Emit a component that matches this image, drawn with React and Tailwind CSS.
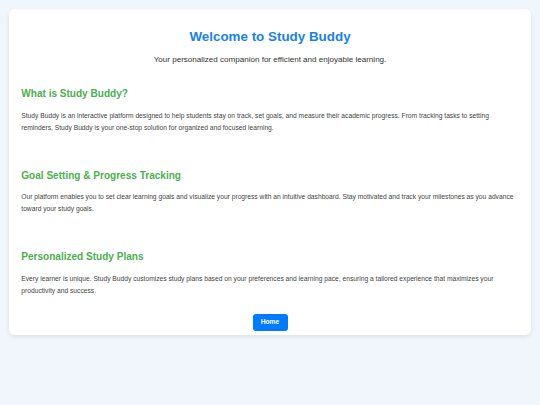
import React from 'react';

const sections = [
  {
    title: 'What is Study Buddy?',
    body: 'Study Buddy is an interactive platform designed to help students stay on track, set goals, and measure their academic progress. From tracking tasks to setting reminders, Study Buddy is your one-stop solution for organized and focused learning.',
  },
  {
    title: 'Goal Setting & Progress Tracking',
    body: 'Our platform enables you to set clear learning goals and visualize your progress with an intuitive dashboard. Stay motivated and track your milestones as you advance toward your study goals.',
  },
  {
    title: 'Personalized Study Plans',
    body: 'Every learner is unique. Study Buddy customizes study plans based on your preferences and learning pace, ensuring a tailored experience that maximizes your productivity and success.',
  },
];

export default function App() {
  return (
    <div className="min-h-[405px] bg-[#f1f6fd] pt-[9px] px-[8.6px] font-['Liberation_Sans',Arial,sans-serif]">
      <div className="bg-white rounded-[6px] shadow-[0_2px_5px_rgba(0,0,0,0.08)] px-[12.7px] pt-[20px] pb-[3.7px]">
        <h1 className="text-center text-[13.4px] leading-[16px] font-bold text-[#1a82e4]">
          Welcome to Study Buddy
        </h1>
        <p className="mt-[10px] text-center text-[8.05px] leading-[10px] text-[#333]">
          Your personalized companion for efficient and enjoyable learning.
        </p>

        {sections.map((s, i) => (
          <section key={s.title} className={i === 0 ? 'mt-[23px]' : 'mt-[36px]'}>
            <h2 className="text-[10.05px] leading-[12px] font-bold text-[#4caf50]">{s.title}</h2>
            <p className="mt-[9.5px] text-[6.7px] leading-[12px] text-[#444]">{s.body}</p>
          </section>
        ))}

        <div className="mt-[17.5px] flex justify-center">
          <button className="w-[35px] h-[17px] rounded-[3px] bg-[#007bff] text-white text-[6.7px] font-bold flex items-center justify-center">
            Home
          </button>
        </div>
      </div>
    </div>
  );
}
